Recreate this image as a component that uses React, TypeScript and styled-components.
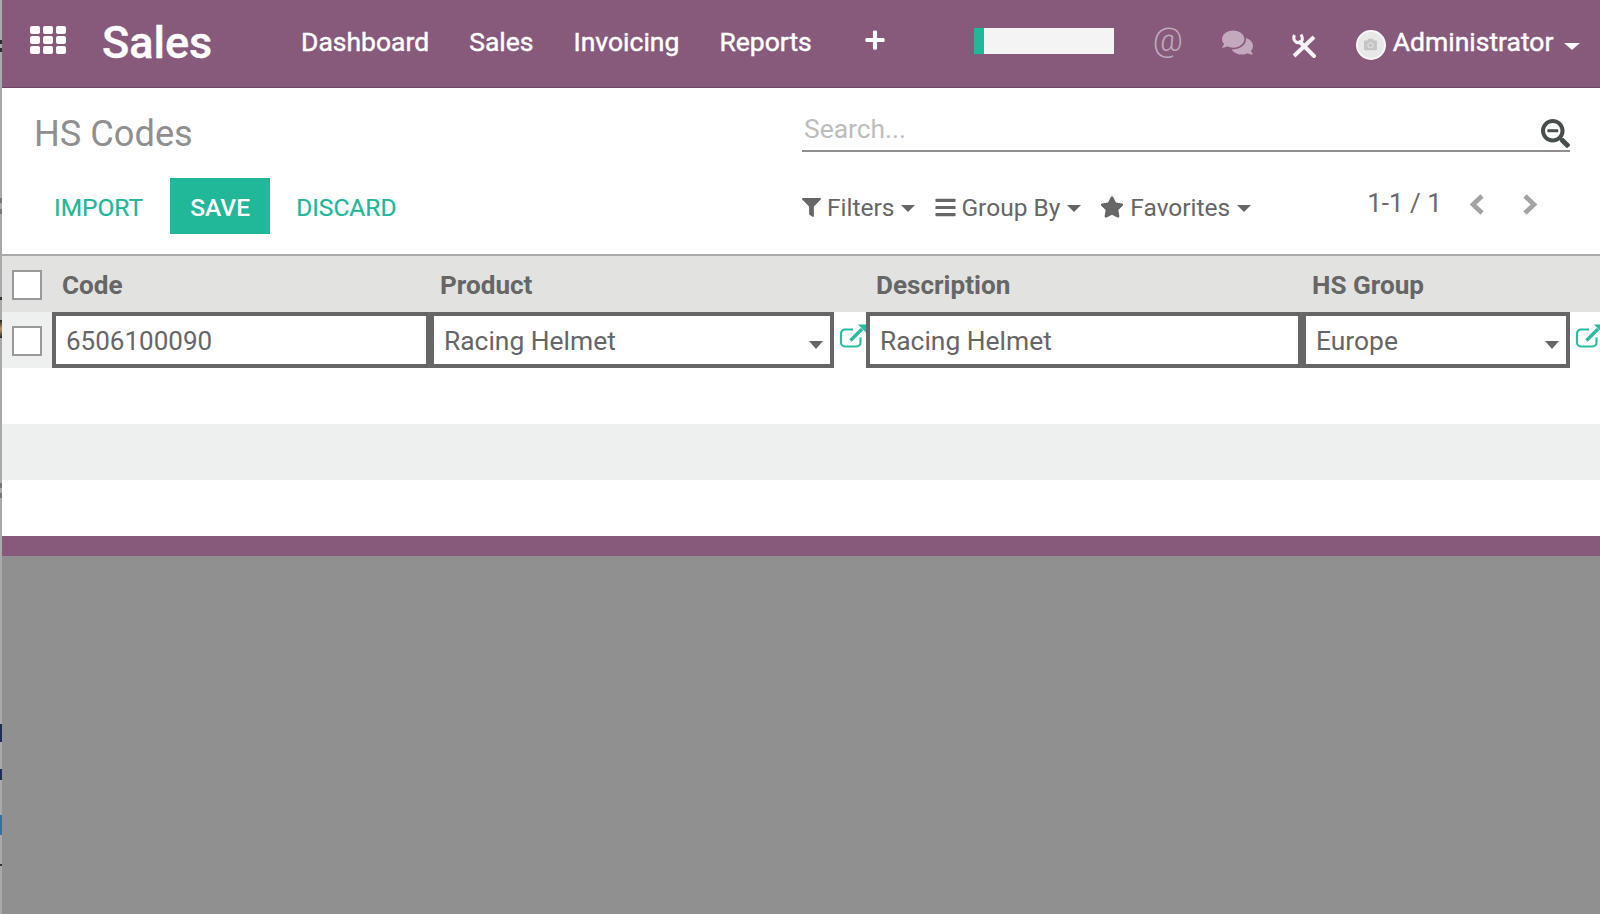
import React from "react";
import styled, { createGlobalStyle } from "styled-components";
import { FaFilter, FaBars, FaStar, FaSearchMinus, FaComments, FaPlus, FaCamera } from "react-icons/fa";

const Global = createGlobalStyle`
  html, body { margin: 0; padding: 0; height: 100%; }
  body { font-family: Roboto, "Liberation Sans", sans-serif; background: #909090; overflow: hidden; }
`;

const Page = styled.div`
  position: relative;
  width: 1600px; height: 914px; box-sizing: border-box; overflow: hidden;
  padding-left: 2px; background: #a9a9a9;
  display: flex; flex-direction: column;
`;
const EdgeMarks = styled.div`
  position: absolute; left: 0; top: 0; width: 2px; height: 914px;
  background:
    linear-gradient(#2b2b2b, #2b2b2b) 0 40px / 2px 4px no-repeat,
    linear-gradient(#2b2b2b, #2b2b2b) 0 48px / 2px 4px no-repeat,
    linear-gradient(#777, #777) 0 198px / 2px 5px no-repeat,
    linear-gradient(#777, #777) 0 209px / 2px 5px no-repeat,
    linear-gradient(#333, #333) 0 297px / 2px 3px no-repeat,
    linear-gradient(#2a2320, #b89870, #2a2320) 0 320px / 2px 18px no-repeat,
    linear-gradient(#777, #777) 0 483px / 2px 5px no-repeat,
    linear-gradient(#777, #777) 0 493px / 2px 5px no-repeat,
    linear-gradient(#1d2f55, #1d2f55) 0 724px / 2px 18px no-repeat,
    linear-gradient(#1d2f55, #1d2f55) 0 769px / 2px 11px no-repeat,
    linear-gradient(#3a6ea5, #3a6ea5) 0 815px / 2px 20px no-repeat,
    linear-gradient(#333, #333) 0 864px / 2px 2px no-repeat;
`;

const Navbar = styled.header`
  height: 88px; box-sizing: border-box; flex: none;
  background: #875a7b; border-bottom: 1px solid #6d4863;
  display: flex; align-items: center; color: #fff; padding-left: 28px;
`;
const AppsIcon = styled.svg`
  width: 36px; height: 28px; flex: none; margin-top: -7px; display: block;
`;
const Brand = styled.div`
  font-size: 45px; font-weight: 500; -webkit-text-stroke: 0.4px #fff; margin: -3px 0 0 36px; width: 199px; line-height: 1;
`;
const NavLink = styled.span`
  font-size: 26.5px; font-weight: 400; -webkit-text-stroke: 0.45px #fff; margin-right: 40px; margin-top: -4px; white-space: nowrap;
`;
const PlusBox = styled.span`
  display: flex; margin: -7px 0 0 12px; font-size: 22px;
`;
const Progress = styled.div`
  width: 140px; height: 26px; margin: -6px 0 0 88px; background: #f4f4f4; display: flex;
`;
const ProgressFill = styled.div`
  width: 10px; background: #21b799;
`;
const At = styled.span`
  font-size: 33px; color: #c2a9bd; margin: -9px 0 0 39px; line-height: 1; font-weight: 300; width: 28px;
`;
const Chat = styled.span`
  display: flex; color: #c2a9bd; font-size: 31px; margin: -3px 0 0 41px;
`;
const Tools = styled.svg`
  width: 26px; height: 26px; margin: 4px 0 0 38px; display: block; flex: none; opacity: 0.92;
`;
const Avatar = styled.span`
  width: 30px; height: 30px; border-radius: 50%; background: #e8e8e8; border: 2px solid #f8f8f8; box-sizing: border-box;
  display: flex; align-items: center; justify-content: center; color: #c4c4c4; font-size: 13px; margin: 2px 0 0 39px;
`;
const UserName = styled.span`
  font-size: 26.5px; -webkit-text-stroke: 0.45px #fff; margin: -4px 0 0 7px; white-space: nowrap;
`;
const NavCaret = styled.span`
  width: 0; height: 0; border-left: 8px solid transparent; border-right: 8px solid transparent; border-top: 7px solid #fff;
  margin: 5px 0 0 11px;
`;

const Panel = styled.section`
  height: 166px; flex: none; background: #fff; box-sizing: border-box;
  display: grid; grid-template-columns: 800px 768px; grid-template-rows: 78px 88px;
`;
const Title = styled.h1`
  margin: 0; font-size: 36.2px; font-weight: 400; color: #8f8f8f; padding: 23px 0 0 32px; line-height: 46px;
`;
const SearchBox = styled.div`
  height: 64px; box-sizing: border-box; align-self: end; margin-bottom: 14px; padding-bottom: 2px;
  border-bottom: 2px solid #8f8f8f; display: flex; justify-content: space-between; align-items: flex-end;
  color: #474d4d;
`;
const Placeholder = styled.span`
  font-size: 26.4px; line-height: 32px; color: #bdbdbd; margin: 0 0 3px 2px;
`;
const Buttons = styled.div`
  display: flex; align-items: center; padding: 12px 0 0 52px; height: 56px;
`;
const LinkButton = styled.span`
  font-size: 24.5px; color: #21b799; white-space: nowrap; margin-top: 2px; -webkit-text-stroke: 0.2px #21b799;
`;
const SaveButton = styled.span`
  width: 100px; height: 56px; background: #21b799; color: #fff; font-size: 24.5px; font-weight: 500;
  display: flex; align-items: center; justify-content: center; margin: 0 26px 0 27px; padding-top: 2px; box-sizing: border-box;
`;
const FilterBar = styled.div`
  display: flex; align-items: flex-start; padding-top: 25px; color: #666;
`;
const Filter = styled.span<{ $gap: number }>`
  display: flex; align-items: center; font-size: 24.5px; height: 32px; margin-right: 19px; white-space: nowrap;
  svg { margin-right: ${(p) => p.$gap}px; flex: none; }
`;
const SmallCaret = styled.span`
  width: 0; height: 0; border-left: 7.5px solid transparent; border-right: 7.5px solid transparent; border-top: 7px solid #666;
  margin: 3px 0 0 7px;
`;
const Pager = styled.div`
  margin-left: 97px; margin-top: -4px; font-size: 26px; display: flex; align-items: center; color: #6a6a6a; height: 32px; white-space: nowrap;
`;
const PagerArrow = styled.svg<{ $first?: boolean }>`
  width: 15px; height: 21px; display: block; margin-left: ${(p) => (p.$first ? "27px" : "39px")}; margin-top: 2px; flex: none;
`;

const Columns = "50px 378px 404px 32px 436px 268px 30px";
const HeaderRow = styled.div`
  height: 58px; flex: none; box-sizing: border-box; background: #e2e2e0; border-top: 2px solid #a9a9a9;
  display: grid; grid-template-columns: ${Columns}; align-items: center;
`;
const HeadCell = styled.div`
  font-size: 26.1px; font-weight: 700; color: #666; padding: 2px 0 0 10px; white-space: nowrap;
`;
const CheckCell = styled.div`
  display: flex; align-items: center; padding: 2px 0 0 10px; height: 100%; box-sizing: border-box;
`;
const Check = styled.span`
  width: 30px; height: 30px; box-sizing: border-box; border: 2px solid #999; background: #fff; display: block;
`;
const EditRow = styled.div`
  height: 56px; flex: none; background: #fff; display: grid; grid-template-columns: ${Columns};
`;
const SelectCheck = styled(CheckCell)`
  background: #eef0ef;
`;
const Field = styled.div`
  border: 4px solid #666; display: flex; align-items: center; justify-content: space-between; box-sizing: border-box;
  font-size: 26.4px; color: #666; padding: 2px 7px 0 10px; background: #fff; white-space: nowrap;
`;
const CodeField = styled(Field)`
  font-size: 26px;
`;
const FieldCaret = styled.span`
  width: 0; height: 0; border-left: 7.5px solid transparent; border-right: 7.5px solid transparent; border-top: 8px solid #666;
  margin-top: 8px;
`;
const LinkIcon = styled.svg`
  width: 28px; height: 26px; margin: 12px 0 0 5px; display: block; overflow: visible;
`;
const Blank = styled.div<{ $tone?: boolean }>`
  height: 56px; flex: none; background: ${(p) => (p.$tone ? "#eef0ef" : "#fff")};
`;
const Footer = styled.div`
  height: 20px; flex: none; background: #875a7b;
`;
const Rest = styled.div`
  flex: 1; background: #909090;
`;

const Ext = () => (
  <LinkIcon viewBox="0 0 28 26" fill="none" stroke="#2bbb9f" strokeWidth="2.2">
    <path d="M14 5.5H6a4 4 0 0 0-4 4v9a4 4 0 0 0 4 4h11.5a4 4 0 0 0 4-4v-5" />
    <path d="M11.5 16.5 23 5" strokeWidth="3.4" />
    <path d="M19 0.5h8.5V9z" fill="#2bbb9f" stroke="none" />
  </LinkIcon>
);

const App = () => (
  <Page>
    <Global />
    <Navbar>
      <AppsIcon viewBox="0 0 36 28" fill="#fff">
        {[0, 1, 2].flatMap((r) =>
          [0, 1, 2].map((c) => <rect key={`${r}${c}`} x={c * 13} y={r * 10} width="10" height="8" rx="2" />)
        )}
      </AppsIcon>
      <Brand>Sales</Brand>
      <NavLink>Dashboard</NavLink>
      <NavLink>Sales</NavLink>
      <NavLink>Invoicing</NavLink>
      <NavLink>Reports</NavLink>
      <PlusBox><FaPlus /></PlusBox>
      <Progress><ProgressFill /></Progress>
      <At>@</At>
      <Chat><FaComments /></Chat>
      <Tools viewBox="0 0 26 26" fill="none" stroke="#fff">
        <path d="M3 23 23 4" strokeWidth="4" />
        <path d="M9 9 23 23" strokeWidth="4" strokeLinecap="round" />
        <path d="M3.5 2C1.5 6 4 10.5 9 9.5 11.5 8 12 5 10 1.5" strokeWidth="3" />
      </Tools>
      <Avatar><FaCamera /></Avatar>
      <UserName>Administrator</UserName>
      <NavCaret />
    </Navbar>
    <Panel>
      <Title>HS Codes</Title>
      <SearchBox>
        <Placeholder>Search...</Placeholder>
        <FaSearchMinus size={29} />
      </SearchBox>
      <Buttons>
        <LinkButton>IMPORT</LinkButton>
        <SaveButton>SAVE</SaveButton>
        <LinkButton>DISCARD</LinkButton>
      </Buttons>
      <FilterBar>
        <Filter $gap={6}><FaFilter size={19} />Filters<SmallCaret /></Filter>
        <Filter $gap={4}><FaBars size={23} />Group By<SmallCaret /></Filter>
        <Filter $gap={6}><FaStar size={24} />Favorites<SmallCaret /></Filter>
        <Pager>
          1-1 / 1
          <PagerArrow $first viewBox="0 0 15 21" fill="none" stroke="#a3a3a3" strokeWidth="4.6">
            <path d="M13 2 4 10.5 13 19" />
          </PagerArrow>
          <PagerArrow viewBox="0 0 15 21" fill="none" stroke="#a3a3a3" strokeWidth="4.6">
            <path d="M2 2l9 8.5L2 19" />
          </PagerArrow>
        </Pager>
      </FilterBar>
    </Panel>
    <HeaderRow>
      <CheckCell><Check /></CheckCell>
      <HeadCell>Code</HeadCell>
      <HeadCell>Product</HeadCell>
      <span />
      <HeadCell>Description</HeadCell>
      <HeadCell>HS Group</HeadCell>
    </HeaderRow>
    <EditRow>
      <SelectCheck><Check /></SelectCheck>
      <CodeField>6506100090</CodeField>
      <Field>Racing Helmet<FieldCaret /></Field>
      <Ext />
      <Field>Racing Helmet</Field>
      <Field>Europe<FieldCaret /></Field>
      <Ext />
    </EditRow>
    <Blank />
    <Blank $tone />
    <Blank />
    <Footer />
    <Rest />
    <EdgeMarks />
  </Page>
);

export default App;
